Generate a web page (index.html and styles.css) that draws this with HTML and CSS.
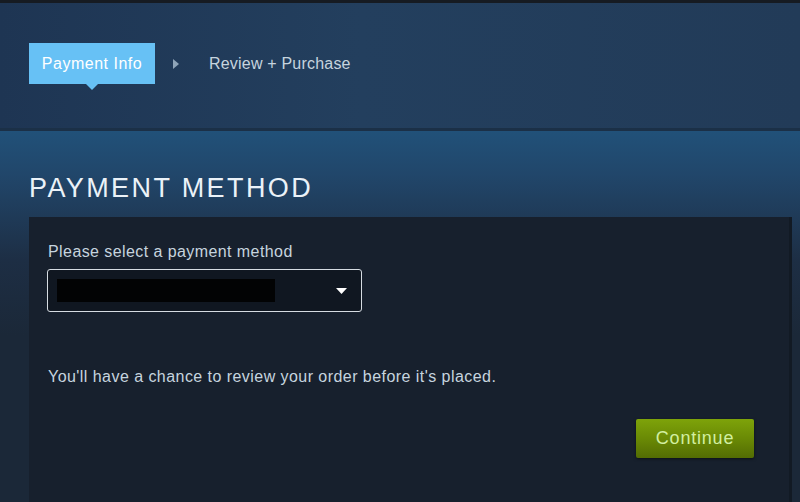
FILE: index.html
```html
<!DOCTYPE html>
<html>
<head>
<meta charset="utf-8">
<link rel="stylesheet" href="styles.css">
</head>
<body>
<div class="topline"></div>
<header class="header">
  <nav class="steps">
    <div class="step active">Payment Info</div>
    <div class="sep"><svg width="6" height="10" viewBox="0 0 6 10"><path d="M0 0 L6 5 L0 10 Z" fill="#8ea4b8"/></svg></div>
    <div class="step">Review + Purchase</div>
  </nav>
</header>
<main class="main">
  <h1 class="title">PAYMENT METHOD</h1>
  <section class="panel">
    <div class="label">Please select a payment method</div>
    <div class="select">
      <div class="redact"></div>
      <svg class="caret" width="11" height="6" viewBox="0 0 11 6"><path d="M0 0 H11 L5.5 6 Z" fill="#ffffff"/></svg>
    </div>
    <p class="note">You'll have a chance to review your order before it's placed.</p>
    <div class="actions">
      <button class="btn">Continue</button>
    </div>
  </section>
</main>
</body>
</html>
```

FILE: styles.css
```css
html, body {
  margin: 0;
  padding: 0;
}
body {
  width: 800px;
  height: 502px;
  overflow: hidden;
  background: #1b2838;
  font-family: "Liberation Sans", Arial, sans-serif;
  color: #c6d4df;
}
.topline {
  height: 3px;
  background: #161b22;
}
.header {
  height: 125px;
  background: linear-gradient(90deg, #1e3553 0%, #233f5e 45%, #223b58 100%);
  border-bottom: 3px solid #1b3047;
  box-sizing: content-box;
}
.steps {
  display: flex;
  align-items: center;
  padding: 40px 0 0 29px;
}
.step {
  font-size: 16px;
  letter-spacing: 0.2px;
  color: #c6d4df;
}
.step.active {
  position: relative;
  background: #67c1f5;
  color: #ffffff;
  letter-spacing: 0.5px;
  width: 126px;
  height: 41px;
  display: flex;
  align-items: center;
  justify-content: center;
}
.step.active::after {
  content: "";
  position: absolute;
  left: 57px;
  bottom: -6px;
  border-left: 6px solid transparent;
  border-right: 6px solid transparent;
  border-top: 6px solid #67c1f5;
}
.sep {
  width: 54px;
  display: flex;
  justify-content: flex-start;
  padding-left: 18px;
  box-sizing: border-box;
}
.main {
  height: 371px;
  background: linear-gradient(180deg, #215179 0%, #21466a 12%, #1d2e44 35%, #1b2838 55%, #1b2838 100%);
  padding: 0 8px 0 29px;
  display: flex;
  flex-direction: column;
}
.title {
  margin: 42px 0 0 0;
  height: 44px;
  font-weight: normal;
  font-size: 27px;
  letter-spacing: 2.4px;
  color: #ebf2f8;
  line-height: 30px;
}
.panel {
  flex: 1;
  background: #17202d;
  border-right: 3px solid #121a24;
  padding: 26px 19px 0 19px;
}
.label {
  font-size: 16px;
  letter-spacing: 0.42px;
  line-height: 18px;
  color: #c6d4df;
  margin-bottom: 8px;
}
.select {
  height: 41px;
  border: 1px solid #d6dce2;
  border-radius: 3px;
  background: #101721;
  display: flex;
  align-items: center;
  justify-content: space-between;
  padding: 0 14px 0 9px;
  box-sizing: content-box;
  margin-left: -1px;
  width: 290px;
}
.redact {
  width: 218px;
  height: 23px;
  background: #020304;
}
.caret { margin-top: 1px; }
.note {
  margin: 56px 0 0 0;
  font-size: 16px;
  letter-spacing: 0.45px;
  line-height: 18px;
  color: #c6d4df;
}
.actions {
  display: flex;
  justify-content: flex-end;
  margin-top: 33px;
  padding-right: 16px;
}
.btn {
  width: 118px;
  height: 39px;
  border: none;
  border-radius: 2px;
  background: linear-gradient(180deg, #7ea30a 0%, #6a8a05 50%, #536c03 100%);
  color: #d2efa0;
  font-family: "Liberation Sans", Arial, sans-serif;
  font-size: 18px;
  letter-spacing: 0.8px;
  box-shadow: 0 1px 3px rgba(0,0,0,0.5);
  padding: 0;
}
```
